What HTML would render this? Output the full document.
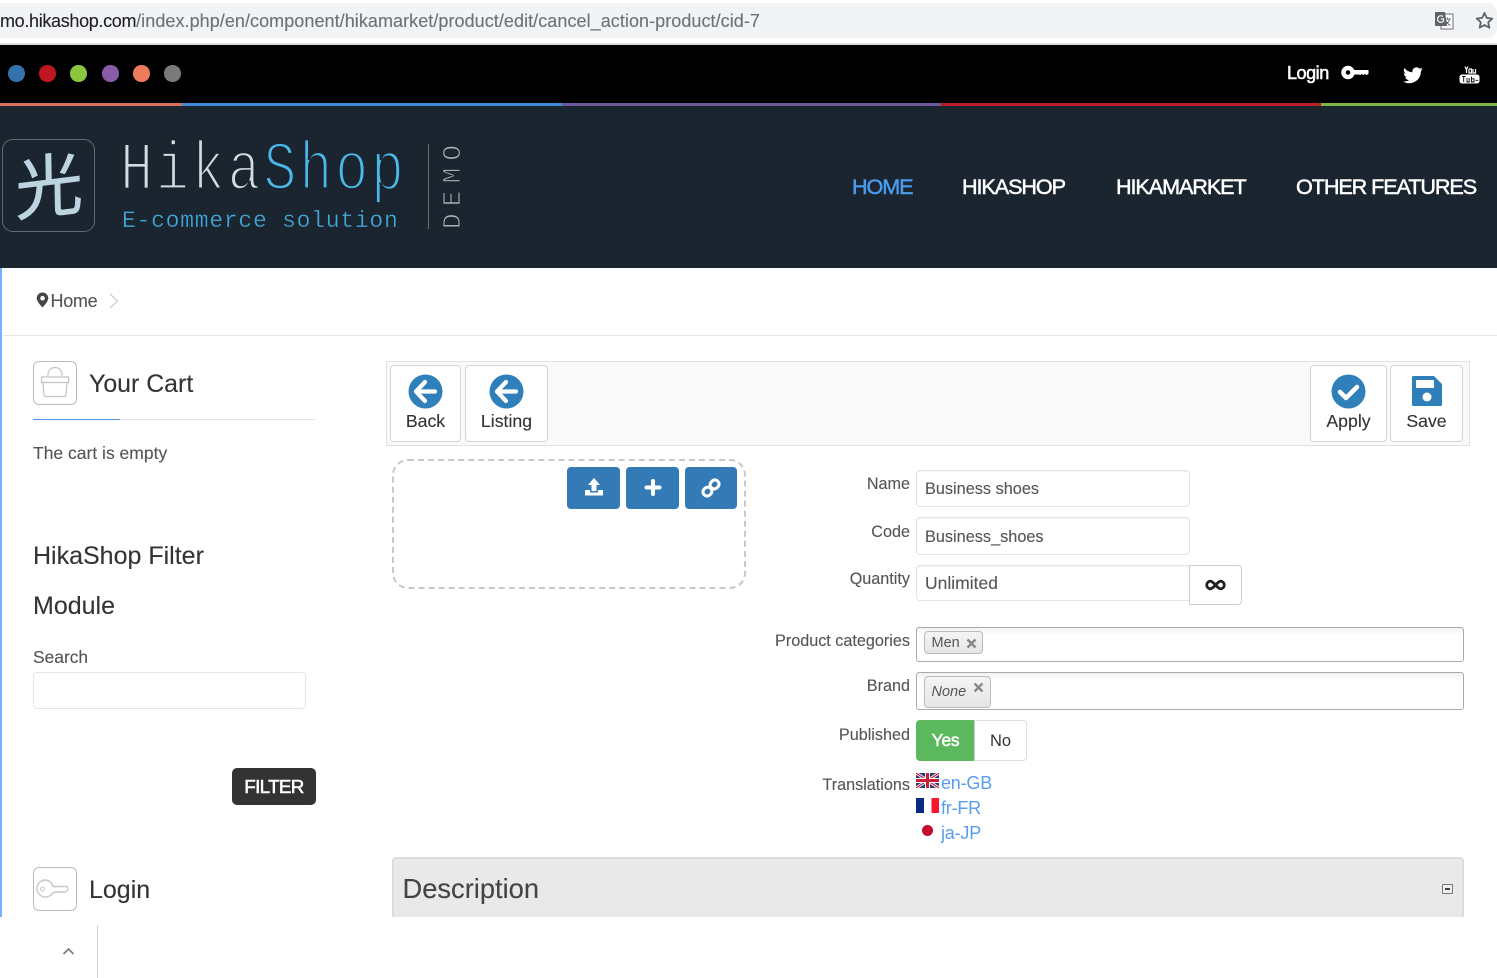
<!DOCTYPE html>
<html lang="en"><head><meta charset="utf-8"><title>HikaShop</title>
<style>
html,body{margin:0;padding:0;background:#fff;width:1497px;height:978px;overflow:hidden}
body{position:relative;font-family:"Liberation Sans","Noto Sans CJK JP",sans-serif;color:#555}
.a{position:absolute}
.t{position:absolute;white-space:nowrap;line-height:1;-webkit-text-stroke:.12px currentColor}
.r{position:absolute;white-space:nowrap;line-height:1;right:587px;font-size:16.200px;color:#555;-webkit-text-stroke:.12px currentColor}
.dot{position:absolute;top:65px;width:16.500px;height:16.500px;border-radius:50%}
.nav{position:absolute;top:175px;font-size:21.600px;line-height:24px;color:#fff;letter-spacing:-1.080px;white-space:nowrap;-webkit-text-stroke:.5px currentColor}
.tb{position:absolute;top:365px;height:77px;box-sizing:border-box;background:#fff;border:1px solid #d4d4d4;border-radius:4px}
.tb span{position:absolute;left:0;right:0;top:45px;text-align:center;font-size:17.700px;line-height:20px;color:#333;-webkit-text-stroke:.12px currentColor}
.blue{position:absolute;top:467px;height:42px;background:#337ab7;border-radius:4px}
.in{position:absolute;left:916px;background:#fff;border:1px solid #e4e4e4;border-radius:4px;box-sizing:border-box;box-shadow:inset 0 1px 1px rgba(0,0,0,.05);font-size:16.300px;color:#555;padding-left:8px;-webkit-text-stroke:.12px #555}
.ms{position:absolute;left:916px;width:548px;background:linear-gradient(#f2f2f2,#fff 7px);border:1px solid #aaa;border-radius:3px;box-sizing:border-box}
.tag{position:absolute;left:7px;background:linear-gradient(#f4f4f4,#e6e6e6);border:1px solid #bbb;border-radius:4px;box-sizing:border-box;font-size:14.500px;color:#555}
.lnk{position:absolute;left:941px;font-size:18px;line-height:20px;color:#5a9cf0;white-space:nowrap;letter-spacing:-.2px}
</style></head><body>

<!-- browser bar -->
<div class="a" style="left:0;top:3px;width:1497px;height:35px;background:#f1f3f4;border-radius:0 10px 10px 0"></div>
<div class="t" style="left:0;top:12px;font-size:18px;color:#202124;letter-spacing:-.33px">mo.hikashop.com<span style="color:#6b7178;letter-spacing:.06px">/index.php/en/component/hikamarket/product/edit/cancel_action-product/cid-7</span></div>
<svg class="a" style="left:1434px;top:11px" width="20" height="19" viewBox="0 0 20 19"><rect x="7" y="3" width="12" height="15" fill="#fff" stroke="#6a6d70"/><path d="M10 8h7M13.500 6.500v1.500M15.500 8c-.5 3-3 5-5 6M11.500 9.500c1 2 3 4 5 5" stroke="#6a6d70" fill="none"/><path d="M2 1h9l2 14H2a1 1 0 0 1-1-1V2a1 1 0 0 1 1-1z" fill="#5f6368"/><path d="M9 5.500A3.300 3.300 0 1 0 9.500 10V8H6.800" fill="none" stroke="#eee" stroke-width="1.300"/></svg>
<svg class="a" style="left:1475px;top:11px" width="19" height="19" viewBox="0 0 24 24"><path d="M12 2.500l2.900 6.300 6.900.8-5.100 4.700 1.400 6.800L12 17.700 5.900 21l1.400-6.800-5.100-4.700 6.900-.8z" fill="none" stroke="#5f6368" stroke-width="2.300" stroke-linejoin="round"/></svg>
<div class="a" style="left:0;top:43px;width:1497px;height:2px;background:#dadce0"></div>

<!-- top bar -->
<div class="a" style="left:0;top:45px;width:1497px;height:58px;background:#000"></div>
<div class="dot" style="left:8px;background:#3472ae"></div>
<div class="dot" style="left:39px;background:#bf1722"></div>
<div class="dot" style="left:70px;background:#8cc63f"></div>
<div class="dot" style="left:102px;background:#8a5ca8"></div>
<div class="dot" style="left:133px;background:#ee7b5c"></div>
<div class="dot" style="left:164px;background:#7a7a7a"></div>
<div class="t" style="left:1287px;top:64px;font-size:18px;color:#fff;letter-spacing:-.45px;-webkit-text-stroke:.55px #fff">Login</div>
<svg class="a" style="left:1341px;top:65px" width="28" height="16" viewBox="0 0 28 16"><circle cx="7" cy="7.500" r="4.500" fill="none" stroke="#fff" stroke-width="4.500"/><path d="M11 5h16.500v4l-2 1-1.500-1-1.500 1-1.500-1-1.500 1L17 9.500h-6z" fill="#fff"/></svg>
<svg class="a" style="left:1403px;top:66px" width="20" height="18" viewBox="0 0 24 20"><path d="M23.500 3c-.9.400-1.800.7-2.800.8 1-.6 1.800-1.500 2.100-2.700-.9.600-2 1-3.100 1.200A4.900 4.900 0 0 0 11.400 6.800 13.900 13.900 0 0 1 1.700 1.800a4.900 4.900 0 0 0 1.500 6.500c-.8 0-1.500-.2-2.200-.6 0 2.400 1.700 4.400 3.900 4.900-.7.200-1.500.2-2.200.1.600 2 2.400 3.400 4.600 3.400A9.900 9.900 0 0 1 0 17.600 13.900 13.900 0 0 0 21.500 5.200c1-.6 1.500-1.300 2-2.200z" fill="#fff"/></svg>
<svg class="a" style="left:1459px;top:66px" width="21" height="18" viewBox="0 0 21 18"><rect x="0.500" y="8.500" width="20" height="9" rx="2.500" fill="#fff"/><path d="M3 10.500h3.500M4.700 10.500v5.500M8 12v4h2.200v-4M12.500 10.500V16h2.500v-3.200h-2.500M16.500 14.300h2.800" stroke="#000" stroke-width=".9" fill="none"/><path d="M6 .5l1.500 3 1.500-3M7.500 3.500V7M10 3v4h2.500V3H10M14 3v4h2.500V3" stroke="#fff" stroke-width="1.200" fill="none"/></svg>

<!-- stripe -->
<div class="a" style="left:0;top:103px;width:182px;height:3px;background:#d9705a"></div>
<div class="a" style="left:182px;top:103px;width:380px;height:3px;background:#3e8ad6"></div>
<div class="a" style="left:562px;top:103px;width:379px;height:3px;background:#6d5a9c"></div>
<div class="a" style="left:941px;top:103px;width:380px;height:3px;background:#b91c25"></div>
<div class="a" style="left:1321px;top:103px;width:176px;height:3px;background:#7fb646"></div>

<!-- header -->
<div class="a" style="left:0;top:106px;width:1497px;height:162px;background:#1a2530"></div>
<div class="a" style="left:2px;top:139px;width:93px;height:93px;box-sizing:border-box;border:1.500px solid #5f6b74;border-radius:11px"></div>
<div class="t" style="left:11px;top:144px;font-size:68px;width:76px;text-align:center;color:#bcd4df;font-family:'Noto Sans CJK JP',sans-serif;line-height:76px;transform:rotate(-7deg) skewX(-6deg);-webkit-text-stroke:.8px #bcd4df">光</div>

<div class="t" style="left:120px;top:132px;font-family:'Liberation Mono',monospace;font-size:69px;line-height:78px;letter-spacing:3.400px;transform:scaleX(.8);transform-origin:0 0;-webkit-text-stroke:2.700px #1a2530;color:#d2dde2">Hika<span style="color:#4cb8ea">Shop</span></div>
<div class="t" style="left:122px;top:209px;font-family:'Liberation Mono',monospace;font-size:23px;line-height:25px;letter-spacing:.75px;-webkit-text-stroke:.35px #1a2530;color:#43a8d8">E-commerce solution</div>
<div class="a" style="left:428px;top:144px;width:1px;height:85px;background:#65727a"></div>
<div class="t" style="left:444px;top:229px;font-family:'Liberation Mono',monospace;font-size:26px;line-height:18px;letter-spacing:7.200px;transform:rotate(-90deg);transform-origin:0 0;-webkit-text-stroke:.9px #1a2530;color:#a8b3b9">DEMO</div>

<div class="nav" style="left:852px;color:#4a9bec">HOME</div>
<div class="nav" style="left:962px">HIKASHOP</div>
<div class="nav" style="left:1116px">HIKAMARKET</div>
<div class="nav" style="left:1296px">OTHER FEATURES</div>

<!-- left accent and breadcrumb -->
<div class="a" style="left:0;top:268px;width:2px;height:649px;background:#74b3fb"></div>
<svg class="a" style="left:36px;top:292px" width="13" height="16" viewBox="0 0 13 16"><path d="M6.500.5A5.800 5.800 0 0 0 .7 6.300C.7 9.800 6.500 15.500 6.500 15.500s5.800-5.700 5.800-9.200A5.800 5.800 0 0 0 6.500.5zm0 8a2.300 2.300 0 1 1 0-4.600 2.300 2.300 0 0 1 0 4.600z" fill="#444"/></svg>
<div class="t" style="left:50.500px;top:292px;font-size:18px;letter-spacing:-.3px;color:#555">Home</div>
<svg class="a" style="left:108px;top:292px" width="12" height="18" viewBox="0 0 12 18"><path d="M2 2l7.500 7L2 16" fill="none" stroke="#ccc" stroke-width="1.200"/></svg>
<div class="a" style="left:3px;top:335px;width:1494px;height:1px;background:#e6e6e6"></div>

<!-- sidebar -->
<div class="a" style="left:33px;top:361px;width:44px;height:44px;box-sizing:border-box;border:1px solid #bbb;border-radius:6px"></div>
<svg class="a" style="left:39px;top:366px" width="32" height="34" viewBox="0 0 32 34"><path d="M9 11V8a7 6.500 0 0 1 14 0v3" fill="none" stroke="#c4c4c4" stroke-width="1.200"/><path d="M2.500 11h27v5.500h-27zM4 16.500l1 12.500a1.500 1.500 0 0 0 1.500 1.500h19a1.500 1.500 0 0 0 1.500-1.500l1-12.500" fill="none" stroke="#c4c4c4" stroke-width="1.200"/></svg>
<div class="t" style="left:89px;top:372px;font-size:24.900px;color:#333">Your Cart</div>
<div class="a" style="left:33px;top:419px;width:283px;height:1px;background:#e2e2e2"></div>
<div class="a" style="left:33px;top:419px;width:87px;height:1px;background:#4a90e2"></div>
<div class="t" style="left:33px;top:445px;font-size:17.500px;color:#555">The cart is empty</div>
<div class="t" style="left:33px;top:544px;font-size:25px;color:#333">HikaShop Filter</div>
<div class="t" style="left:33px;top:594px;font-size:25px;color:#333">Module</div>
<div class="t" style="left:33px;top:649px;font-size:17.400px;color:#555">Search</div>
<div class="a" style="left:33px;top:672px;width:273px;height:37px;box-sizing:border-box;border:1px solid #e6e6e6;border-radius:4px"></div>
<div class="a" style="left:232px;top:768px;width:84px;height:37px;background:#333;border-radius:5px;color:#fff;font-size:18.800px;line-height:37px;text-align:center;letter-spacing:-.65px;-webkit-text-stroke:.55px #fff">FILTER</div>
<div class="a" style="left:33px;top:867px;width:44px;height:44px;box-sizing:border-box;border:1px solid #bbb;border-radius:6px"></div>
<svg class="a" style="left:36px;top:878px" width="36" height="22" viewBox="0 0 36 22"><path d="M9.500 2a8.500 8.500 0 1 0 7.500 12.500h2l1.500-1 1.500 1 1.500-1 1.500 1 1.500-1 1.500 1 3-1.500c1-1 1-3.500 0-4.500H17A8.500 8.500 0 0 0 9.500 2z" fill="none" stroke="#c8c8c8" stroke-width="1.400"/><circle cx="6.500" cy="11" r="2" fill="none" stroke="#c8c8c8"/></svg>
<div class="t" style="left:89px;top:878px;font-size:25px;color:#333">Login</div>

<!-- toolbar -->
<div class="a" style="left:386px;top:361px;width:1084px;height:85px;box-sizing:border-box;background:#f9f9f9;border:1px solid #e2e2e2"></div>
<div class="tb" style="left:390px;width:71px"><svg class="a" style="left:17px;top:8px" width="35" height="35" viewBox="0 0 35 35"><circle cx="17.500" cy="17.500" r="17" fill="#2f7fba"/><path d="M17 8L8 17.500l9 9.500M9 17.500h18" fill="none" stroke="#fff" stroke-width="4.200" stroke-linecap="round" stroke-linejoin="round"/></svg><span>Back</span></div>
<div class="tb" style="left:465px;width:83px"><svg class="a" style="left:23px;top:8px" width="35" height="35" viewBox="0 0 35 35"><circle cx="17.500" cy="17.500" r="17" fill="#2f7fba"/><path d="M17 8L8 17.500l9 9.500M9 17.500h18" fill="none" stroke="#fff" stroke-width="4.200" stroke-linecap="round" stroke-linejoin="round"/></svg><span>Listing</span></div>
<div class="tb" style="left:1310px;width:77px"><svg class="a" style="left:20px;top:8px" width="35" height="35" viewBox="0 0 35 35"><circle cx="17.500" cy="17.500" r="17" fill="#2f7fba"/><path d="M9 18l6 6 11-11" fill="none" stroke="#fff" stroke-width="4.500" stroke-linecap="round" stroke-linejoin="round"/></svg><span>Apply</span></div>
<div class="tb" style="left:1390px;width:73px"><svg class="a" style="left:19.500px;top:9px" width="32" height="32" viewBox="0 0 32 32"><path d="M2.500 1H23l8 8v20.500a1.500 1.500 0 0 1-1.500 1.500h-27A1.500 1.500 0 0 1 1 29.500v-27A1.500 1.500 0 0 1 2.500 1z" fill="#2f7fba"/><rect x="5" y="5" width="18" height="8" fill="#fff"/><circle cx="16" cy="22" r="4.500" fill="#fff"/></svg><span>Save</span></div>

<!-- image zone -->
<div class="a" style="left:392px;top:459px;width:354px;height:130px;box-sizing:border-box;border:2px dashed #c8c8c8;border-radius:16px"></div>
<div class="blue" style="left:567px;width:53px"><svg class="a" style="left:17px;top:10px" width="20" height="20" viewBox="0 0 20 20"><path d="M10 1l6 7h-3.500v6h-5V8H4z" fill="#fff"/><path d="M1 13h5v2.500h8V13h5v5.500H1z" fill="#fff"/></svg></div>
<div class="blue" style="left:626px;width:53px"><svg class="a" style="left:18px;top:12px" width="18" height="18" viewBox="0 0 18 18"><path d="M9 2v13M2.500 8.500h13" stroke="#fff" stroke-width="4" stroke-linecap="round"/></svg></div>
<div class="blue" style="left:685px;width:52px"><svg class="a" style="left:16px;top:11px" width="20" height="20" viewBox="0 0 21 21"><g fill="none" stroke="#fff" stroke-width="3.200"><rect x="10" y="2" width="8.500" height="9.500" rx="4" transform="rotate(45 14.250 6.750)"/><rect x="2.500" y="9.500" width="8.500" height="9.500" rx="4" transform="rotate(45 6.750 14.250)"/></g></svg></div>

<!-- form -->
<div class="r" style="top:475.500px">Name</div>
<div class="r" style="top:523.500px">Code</div>
<div class="r" style="top:570.500px">Quantity</div>
<div class="r" style="top:632.500px">Product categories</div>
<div class="r" style="top:677.500px">Brand</div>
<div class="r" style="top:726.500px">Published</div>
<div class="r" style="top:776.500px">Translations</div>

<div class="in" style="top:470px;width:274px;height:37px;line-height:37px">Business shoes</div>
<div class="in" style="top:517px;width:274px;height:38px;line-height:38px">Business_shoes</div>
<div class="in" style="top:565px;width:275px;height:36px;line-height:35px;font-size:17.500px;border-radius:4px 0 0 4px">Unlimited</div>
<div class="a" style="left:1189px;top:565px;width:53px;height:40px;box-sizing:border-box;background:#fff;border:1px solid #ccc;border-radius:0 4px 4px 0"></div>
<svg class="a" style="left:1205px;top:579px" width="21" height="12" viewBox="0 0 21 12"><path d="M5.500 2.200a3.800 3.800 0 1 0 0 7.600c3 0 7-7.600 10-7.600a3.800 3.800 0 1 1 0 7.600c-3 0-7-7.600-10-7.600z" fill="none" stroke="#222" stroke-width="2.800"/></svg>

<div class="ms" style="top:627px;height:35px"><div class="tag" style="top:3px;width:59px;height:23px;line-height:23px;padding-left:6.500px">Men<svg class="a" style="left:41px;top:6px" width="11" height="11" viewBox="0 0 11 11"><path d="M1.500 1.500l8 8M9.500 1.500l-8 8" stroke="#888" stroke-width="2.500"/></svg></div></div>
<div class="ms" style="top:672px;height:38px"><div class="tag" style="top:3px;width:67px;height:32px;line-height:30px;padding-left:6.500px;font-style:italic">None<svg class="a" style="left:48px;top:5px" width="11" height="11" viewBox="0 0 11 11"><path d="M1.500 1.500l8 8M9.500 1.500l-8 8" stroke="#888" stroke-width="2.300"/></svg></div></div>

<div class="a" style="left:916px;top:720px;width:58px;height:41px;background:#5cb85c;border-radius:4px 0 0 4px;color:#fff;text-align:center;font-size:17.500px;line-height:41px;letter-spacing:-.3px;-webkit-text-stroke:.5px #fff;padding-left:1px;box-sizing:border-box">Yes</div>
<div class="a" style="left:974px;top:720px;width:53px;height:41px;box-sizing:border-box;border:1px solid #ddd;border-left-color:#ccc;border-radius:0 4px 4px 0;color:#333;text-align:center;font-size:16.500px;line-height:40px">No</div>

<svg class="a" style="left:916px;top:773px" width="23" height="15" viewBox="0 0 23 15"><rect width="23" height="15" fill="#2a3a78"/><path d="M0 0l23 15M23 0L0 15" stroke="#fff" stroke-width="3"/><path d="M0 0l23 15M23 0L0 15" stroke="#c8203a" stroke-width="1.200"/><path d="M11.500 0v15M0 7.500h23" stroke="#fff" stroke-width="5"/><path d="M11.500 0v15M0 7.500h23" stroke="#c8203a" stroke-width="3"/></svg>
<svg class="a" style="left:916px;top:798px" width="23" height="15" viewBox="0 0 23 15"><rect width="8" height="15" fill="#0b2a82"/><rect x="15.500" width="7.500" height="15" fill="#f9172c"/></svg>
<div class="a" style="left:922px;top:825px;width:11px;height:11px;border-radius:50%;background:#c50a32"></div>
<div class="lnk" style="top:773px">en-GB</div>
<div class="lnk" style="top:798px">fr-FR</div>
<div class="lnk" style="top:823px">ja-JP</div>

<!-- description -->
<div class="a" style="left:392px;top:857px;width:1072px;height:60px;box-sizing:border-box;background:#e9e9e9;border:2px solid #dcdcdc;border-bottom:0;border-radius:4px 4px 0 0"></div>
<div class="t" style="left:402.500px;top:875px;font-size:27.300px;color:#444">Description</div>
<div class="a" style="left:1442px;top:884px;width:11px;height:10px;box-sizing:border-box;border:1px solid #777;background:#eee;border-radius:1px"><div class="a" style="left:2px;top:3px;width:5px;height:2px;background:#444"></div></div>

<!-- bottom bar -->
<div class="a" style="left:0;top:917px;width:1497px;height:61px;background:#fff"></div>
<div class="a" style="left:97px;top:925px;width:1px;height:53px;background:#d5d5d5"></div>
<svg class="a" style="left:62px;top:946px" width="13" height="10" viewBox="0 0 13 10"><path d="M1.500 8L6.500 3l5 5" fill="none" stroke="#777" stroke-width="1.600"/></svg>
</body></html>
